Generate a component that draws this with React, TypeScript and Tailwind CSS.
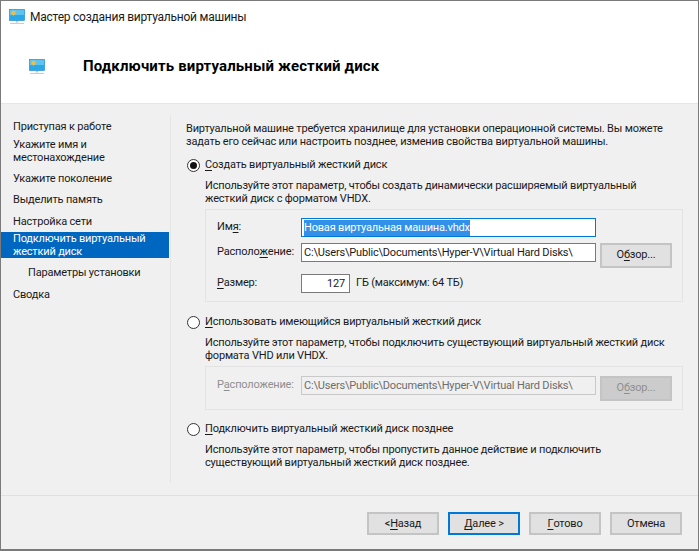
import React from 'react'

const Key = ({ children }: { children: React.ReactNode }) => <span className="underline underline-offset-2">{children}</span>

const VmIcon = ({ className }: { className?: string }) => (
	<svg viewBox="0 0 16 16" className={className}>
		<rect x="0.5" y="0.5" width="15" height="11" fill="#29a8e8" stroke="#1c86c9" strokeWidth="0.6" />
		<rect x="1" y="1" width="14" height="5" fill="#5cc4f2" />
		<circle cx="4.5" cy="4" r="2" fill="#f8c64a" />
		<path d="M4.5 0.8V7.2M1.3 4H7.7M2.3 1.8L6.7 6.2M6.7 1.8L2.3 6.2" stroke="#f4b63c" strokeWidth="0.6" />
		<rect x="7" y="12" width="2" height="1.5" fill="#b9c4cc" />
		<rect x="1" y="14" width="14" height="1" fill="#c5ced4" />
	</svg>
)

const Radio = ({ checked }: { checked?: boolean }) => (
	<div className="w-[13px] h-[13px] rounded-full border border-[#333] bg-white flex items-center justify-center shrink-0">
		{checked && <div className="w-[7px] h-[7px] rounded-full bg-[#111]" />}
	</div>
)

const NavItem = ({ children, active, sub, className }: { children: React.ReactNode; active?: boolean; sub?: boolean; className?: string }) => (
	<div className={`flex items-center leading-[13px] ${sub ? 'pl-[27px]' : 'pl-[12px]'} ${active ? 'bg-[#0067c0] text-white' : ''} ${className ?? ''}`}>
		<div>{children}</div>
	</div>
)

const Field = ({ className, children }: { className?: string; children: React.ReactNode }) => (
	<div className={`h-[19px] border bg-white flex items-center px-[2px] pt-px whitespace-nowrap overflow-hidden ${className ?? 'border-[#7a7a7a]'}`}>{children}</div>
)

const WizardButton = ({ children, focused }: { children: React.ReactNode; focused?: boolean }) => (
	<div className={`w-[72px] h-[23px] pt-px flex items-center justify-center bg-[#e1e1e1] border-2 ${focused ? 'border-[#0078d7]' : 'border-[#c4c4c4]'}`}>{children}</div>
)

export default function App() {
	return (
		<div className="w-[699px] h-[551px] bg-[#f0f0f0] text-[11px] tracking-[-0.18px] text-[#1a1a1a] border-t border-l border-r border-b-2 border-[#7a7a7a] flex flex-col overflow-hidden" style={{ fontFamily: 'Roboto, sans-serif' }}>
			<div className="bg-white h-[103px] shrink-0 border-b border-[#e6e6e6]">
				<div className="h-[31px] flex items-center pl-[8px] gap-[5px]">
					<VmIcon className="w-[16px] h-[16px]" />
					<div className="text-[12px] tracking-[-0.24px]">Мастер создания виртуальной машины</div>
				</div>
				<div className="flex items-center h-[69px] pl-[28px]">
					<VmIcon className="w-[16px] h-[16px]" />
					<div className="ml-[38px] text-[15px] font-bold tracking-[0.14px] text-black">Подключить виртуальный жесткий диск</div>
				</div>
			</div>
			<div className="flex h-[391px] shrink-0">
				<div className="w-[168px] shrink-0 pt-[15px] flex flex-col">
					<NavItem className="h-[14px]">Приступая к работе</NavItem>
					<NavItem className="mt-[5px] h-[26px]">Укажите имя и<br />местонахождение</NavItem>
					<NavItem className="mt-[7px] h-[14px]">Укажите поколение</NavItem>
					<NavItem className="mt-[7px] h-[14px]">Выделить память</NavItem>
					<NavItem className="mt-[8px] h-[14px]">Настройка сети</NavItem>
					<NavItem active className="mt-[4px] h-[26px]">Подключить виртуальный<br />жесткий диск</NavItem>
					<NavItem sub className="mt-[7px] h-[14px]">Параметры установки</NavItem>
					<NavItem className="mt-[8px] h-[14px]">Сводка</NavItem>
				</div>
				<div className="flex-1 flex flex-col mt-[12px] mb-[12px] ml-[1px] border-l border-[#e4e4e4] pl-[16px]">
					<div className="leading-[13px] mt-[6px] -ml-px whitespace-nowrap">
						Виртуальной машине требуется хранилище для установки операционной системы. Вы можете<br />
						задать его сейчас или настроить позднее, изменив свойства виртуальной машины.
					</div>
					<div className="flex items-center mt-[10px] h-[14px] gap-[5px]">
						<Radio checked />
						<div><Key>С</Key>оздать виртуальный жесткий диск</div>
					</div>
					<div className="ml-[18px] mt-[7px] leading-[13px] whitespace-nowrap">
						Используйте этот параметр, чтобы создать динамически расширяемый виртуальный<br />
						жесткий диск с форматом VHDX.
					</div>
					<div className="ml-[18px] mt-[4px] w-[478px] h-[93px] border border-[#e3e3e3] pl-[11px] pt-[8px] pr-[10px] flex flex-col">
						<div className="flex items-center h-[19px]">
							<div className="w-[84px]">Им<Key>я</Key>:</div>
							<Field className="w-[295px] border-[#0078d7]">
								<span className="bg-[#3390e8] text-white">Новая виртуальная машина.vhdx</span>
							</Field>
						</div>
						<div className="flex items-start mt-[6px] h-[25px]">
							<div className="w-[84px] h-[19px] flex items-center">Располо<Key>ж</Key>ение:</div>
							<Field className="w-[295px] border-[#7a7a7a]">C:\Users\Public\Documents\Hyper-V\Virtual Hard Disks\</Field>
							<div className="ml-[4px] w-[72px] h-[25px] bg-[#e1e1e1] border-2 border-[#c4c4c4] flex items-center justify-center">О<Key>б</Key>зор...</div>
						</div>
						<div className="flex items-center mt-[6px] h-[19px]">
							<div className="w-[84px]"><Key>Р</Key>азмер:</div>
							<Field className="w-[49px] justify-end pr-[4px] border-[#7a7a7a]">127</Field>
							<div className="ml-[6px]">ГБ (максимум: 64 ТБ)</div>
						</div>
					</div>
					<div className="flex items-center mt-[13px] h-[14px] gap-[5px]">
						<Radio />
						<div><Key>И</Key>спользовать имеющийся виртуальный жесткий диск</div>
					</div>
					<div className="ml-[18px] mt-[7px] leading-[13px] whitespace-nowrap">
						Используйте этот параметр, чтобы подключить существующий виртуальный жесткий диск<br />
						формата VHD или VHDX.
					</div>
					<div className="ml-[18px] mt-[4px] w-[478px] h-[44px] border border-[#e3e3e3] pl-[11px] pt-[9px] pr-[10px] flex items-start text-[#6d6d6d]">
						<div className="w-[84px] h-[19px] flex items-center text-[#8f8f8f]">Р<Key>а</Key>сположение:</div>
						<Field className="w-[295px] border-[#c9c9c9] !bg-[#f0f0f0]">C:\Users\Public\Documents\Hyper-V\Virtual Hard Disks\</Field>
						<div className="ml-[4px] w-[72px] h-[25px] bg-[#cccccc] border-2 border-[#c4c4c4] flex items-center justify-center text-[#8f8f8f]">О<Key>б</Key>зор...</div>
					</div>
					<div className="flex items-center mt-[12px] h-[14px] gap-[5px]">
						<Radio />
						<div><Key>П</Key>одключить виртуальный жесткий диск позднее</div>
					</div>
					<div className="ml-[18px] mt-[7px] leading-[13px] whitespace-nowrap">
						Используйте этот параметр, чтобы пропустить данное действие и подключить<br />
						существующий виртуальный жесткий диск позднее.
					</div>
				</div>
			</div>
			<div className="flex-1 border-t border-[#e0e0e0] flex justify-end items-start pt-[16px] pr-[16px] gap-[9px]">
				<WizardButton>&lt; <Key>Н</Key>азад</WizardButton>
				<WizardButton focused><Key>Д</Key>алее &gt;</WizardButton>
				<WizardButton><Key>Г</Key>отово</WizardButton>
				<WizardButton>Отмена</WizardButton>
			</div>
		</div>
	)
}
